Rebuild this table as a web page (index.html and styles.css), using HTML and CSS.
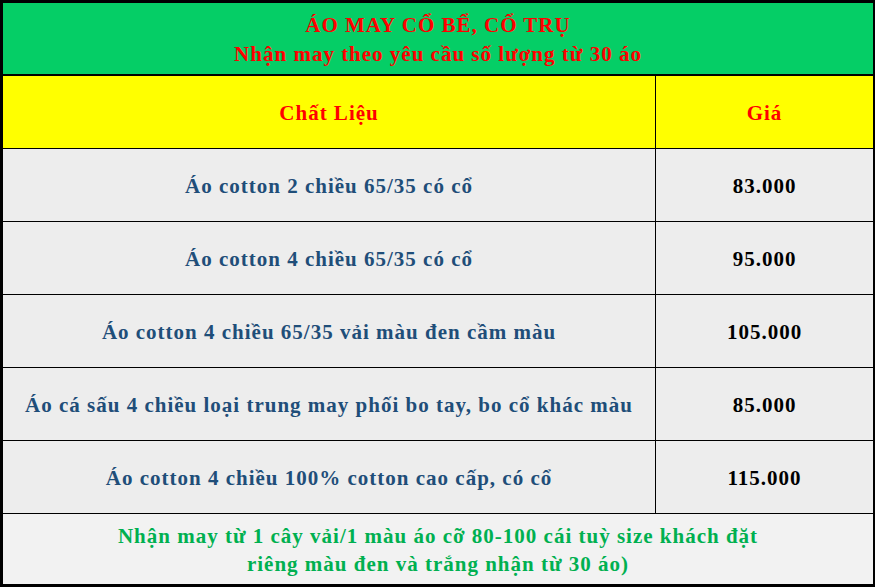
FILE: index.html
```html
<!DOCTYPE html>
<html lang="vi">
<head>
<meta charset="utf-8">
<title>Bảng giá áo may cổ bẻ, cổ trụ</title>
<link rel="stylesheet" href="styles.css">
</head>
<body>
<div class="sheet">
  <div class="title">
    <div>ÁO MAY CỔ BỂ, CỔ TRỤ</div>
    <div>Nhận may theo yêu cầu số lượng từ 30 áo</div>
  </div>
  <div class="row head">
    <div class="cell name">Chất Liệu</div>
    <div class="cell price">Giá</div>
  </div>
  <div class="row">
    <div class="cell name">Áo cotton 2 chiều 65/35 có cổ</div>
    <div class="cell price">83.000</div>
  </div>
  <div class="row">
    <div class="cell name">Áo cotton 4 chiều 65/35 có cổ</div>
    <div class="cell price">95.000</div>
  </div>
  <div class="row">
    <div class="cell name">Áo cotton 4 chiều 65/35 vải màu đen cầm màu</div>
    <div class="cell price">105.000</div>
  </div>
  <div class="row">
    <div class="cell name">Áo cá sấu 4 chiều loại trung may phối bo tay, bo cổ khác màu</div>
    <div class="cell price">85.000</div>
  </div>
  <div class="row">
    <div class="cell name">Áo cotton 4 chiều 100% cotton cao cấp, có cổ</div>
    <div class="cell price">115.000</div>
  </div>
  <div class="note">
    <div>Nhận may từ 1 cây vải/1 màu áo cỡ 80-100 cái tuỳ size khách đặt</div>
    <div>riêng màu đen và trắng nhận từ 30 áo)</div>
  </div>
</div>
</body>
</html>
```
FILE: styles.css
```css
html, body {
  margin: 0;
  padding: 0;
  background: #ffffff;
}

.sheet {
  box-sizing: border-box;
  width: 875px;
  height: 587px;
  border-top: 3px solid #000;
  border-left: 3px solid #000;
  border-right: 2px solid #000;
  border-bottom: 3px solid #000;
  font-family: "Liberation Serif", "Times New Roman", serif;
  font-weight: bold;
  font-size: 21px;
  letter-spacing: 1px;
  display: flex;
  flex-direction: column;
}

.title {
  flex: none;
  box-sizing: content-box;
  height: 69px;
  padding-top: 2px;
  background: #05ce66;
  border-bottom: 2px solid #000;
  color: #ff0000;
  text-align: center;
  line-height: 29px;
  display: flex;
  flex-direction: column;
  justify-content: center;
}

.row {
  flex: none;
  display: grid;
  grid-template-columns: 653px 1fr;
  height: 72px;
  border-bottom: 1px solid #000;
  background: #ededed;
  color: #1f4e79;
  box-sizing: content-box;
}

.row.head {
  background: #ffff00;
  color: #ff0000;
}

.cell {
  display: flex;
  align-items: center;
  justify-content: center;
  text-align: center;
  padding-top: 3px;
}

.cell.name {
  border-right: 1px solid #000;
}

.cell.price {
  color: #000;
}

.row.head .cell.price {
  color: #ff0000;
}

.note {
  flex: 1;
  background: #f2f2f2;
  color: #00b050;
  text-align: center;
  line-height: 28px;
  display: flex;
  flex-direction: column;
  justify-content: center;
  padding-top: 2px;
}
```
